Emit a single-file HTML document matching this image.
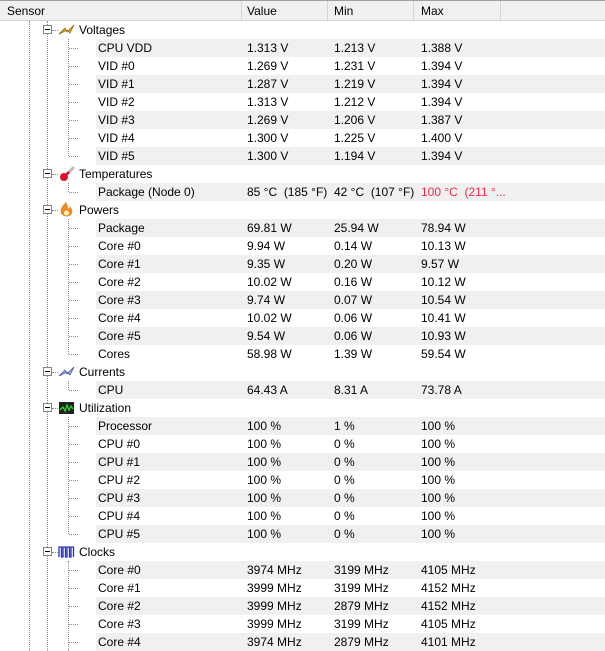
<!DOCTYPE html><html><head><meta charset="utf-8"><style>
body{margin:0;width:605px;height:651px;overflow:hidden;background:#fff;font:12px "Liberation Sans",sans-serif;color:#000;position:relative}
.h{position:absolute;left:0;top:0;width:605px;height:19px;background:#f0f0f0;border-top:1px solid #a0a0a0;border-bottom:1px solid #d5d5d5}
.h span{position:absolute;top:3px}
.h i{position:absolute;top:0;width:1px;height:19px;background:#d5d5d5}
.r{position:absolute;left:0;width:605px;height:18px;line-height:18px}
.s:before{content:"";position:absolute;left:96px;right:0;top:0;bottom:0;background:#f0f0f0}
.r span{position:absolute;top:0;white-space:nowrap}
.n{left:98px}.v{left:247px}.m{left:334px}.x{left:421px}.g{left:79px}
.vl{position:absolute;width:0;border-left:1px dotted #8a8a8a}
.hl{position:absolute;height:0;border-top:1px dotted #8a8a8a}
.b{position:absolute;left:43px;width:7px;height:7px;border:1px solid #848484;background:#fff}
.b:after{content:"";position:absolute;left:1px;top:3px;width:5px;height:1px;background:#000}
.ic{position:absolute;left:58px}
</style></head><body>
<div class="h"><span style="left:7px">Sensor</span><i style="left:241px"></i><span style="left:247px">Value</span><i style="left:327px"></i><span style="left:334px">Min</span><i style="left:413px"></i><span style="left:421px">Max</span><i style="left:500px"></i></div>
<div class="vl" style="left:29px;top:21px;height:630px"></div>
<div class="vl" style="left:47px;top:21px;height:630px"></div>
<!-- child verticals -->
<div class="vl" style="left:68px;top:39px;height:117px"></div>
<div class="vl" style="left:68px;top:183px;height:9px"></div>
<div class="vl" style="left:68px;top:219px;height:135px"></div>
<div class="vl" style="left:68px;top:381px;height:9px"></div>
<div class="vl" style="left:68px;top:417px;height:117px"></div>
<div class="vl" style="left:68px;top:561px;height:90px"></div>

<div class="r" style="top:21px"><div class="b" style="top:4px"></div><div class="hl" style="left:52px;top:9px;width:6px"></div><svg class="ic" width="18" height="18" style="top:0"><path d="M1 13 L7 7 L9 11 L16 4 L12 12 L9 9 Z" fill="#e8b020" stroke="#806000" stroke-width="0.7"/></svg><span class="g">Voltages</span></div>
<div class="r s" style="top:39px"><div class="hl" style="left:69px;top:9px;width:9px"></div><span class="n">CPU VDD</span><span class="v">1.313 V</span><span class="m">1.213 V</span><span class="x">1.388 V</span></div>
<div class="r" style="top:57px"><div class="hl" style="left:69px;top:9px;width:9px"></div><span class="n">VID #0</span><span class="v">1.269 V</span><span class="m">1.231 V</span><span class="x">1.394 V</span></div>
<div class="r s" style="top:75px"><div class="hl" style="left:69px;top:9px;width:9px"></div><span class="n">VID #1</span><span class="v">1.287 V</span><span class="m">1.219 V</span><span class="x">1.394 V</span></div>
<div class="r" style="top:93px"><div class="hl" style="left:69px;top:9px;width:9px"></div><span class="n">VID #2</span><span class="v">1.313 V</span><span class="m">1.212 V</span><span class="x">1.394 V</span></div>
<div class="r s" style="top:111px"><div class="hl" style="left:69px;top:9px;width:9px"></div><span class="n">VID #3</span><span class="v">1.269 V</span><span class="m">1.206 V</span><span class="x">1.387 V</span></div>
<div class="r" style="top:129px"><div class="hl" style="left:69px;top:9px;width:9px"></div><span class="n">VID #4</span><span class="v">1.300 V</span><span class="m">1.225 V</span><span class="x">1.400 V</span></div>
<div class="r s" style="top:147px"><div class="hl" style="left:69px;top:9px;width:9px"></div><span class="n">VID #5</span><span class="v">1.300 V</span><span class="m">1.194 V</span><span class="x">1.394 V</span></div>

<div class="r" style="top:165px"><div class="b" style="top:4px"></div><div class="hl" style="left:52px;top:9px;width:6px"></div><svg class="ic" width="18" height="18"><line x1="4" y1="14" x2="15" y2="3" stroke="#bbb" stroke-width="3" stroke-linecap="round"/><circle cx="6" cy="12" r="4" fill="#e0102a"/><line x1="6" y1="12" x2="11" y2="7" stroke="#e0102a" stroke-width="2.5"/></svg><span class="g">Temperatures</span></div>
<div class="r s" style="top:183px"><div class="hl" style="left:69px;top:9px;width:9px"></div><span class="n">Package (Node 0)</span><span class="v">85 °C&nbsp; (185 °F)</span><span class="m">42 °C&nbsp; (107 °F)</span><span class="x" style="color:#f0284a">100 °C&nbsp; (211 °...</span></div>

<div class="r" style="top:201px"><div class="b" style="top:4px"></div><div class="hl" style="left:52px;top:9px;width:6px"></div><svg class="ic" width="18" height="18"><path d="M8 1 C3 6 2 9 3 12 C4 16 13 17 14 12 C15 9 13 7 12 5 C11 8 10 8 10 7 C10 5 9 3 8 1Z" fill="#f08a20"/><circle cx="8.5" cy="12" r="2.5" fill="#fff3c0"/></svg><span class="g">Powers</span></div>
<div class="r s" style="top:219px"><div class="hl" style="left:69px;top:9px;width:9px"></div><span class="n">Package</span><span class="v">69.81 W</span><span class="m">25.94 W</span><span class="x">78.94 W</span></div>
<div class="r" style="top:237px"><div class="hl" style="left:69px;top:9px;width:9px"></div><span class="n">Core #0</span><span class="v">9.94 W</span><span class="m">0.14 W</span><span class="x">10.13 W</span></div>
<div class="r s" style="top:255px"><div class="hl" style="left:69px;top:9px;width:9px"></div><span class="n">Core #1</span><span class="v">9.35 W</span><span class="m">0.20 W</span><span class="x">9.57 W</span></div>
<div class="r" style="top:273px"><div class="hl" style="left:69px;top:9px;width:9px"></div><span class="n">Core #2</span><span class="v">10.02 W</span><span class="m">0.16 W</span><span class="x">10.12 W</span></div>
<div class="r s" style="top:291px"><div class="hl" style="left:69px;top:9px;width:9px"></div><span class="n">Core #3</span><span class="v">9.74 W</span><span class="m">0.07 W</span><span class="x">10.54 W</span></div>
<div class="r" style="top:309px"><div class="hl" style="left:69px;top:9px;width:9px"></div><span class="n">Core #4</span><span class="v">10.02 W</span><span class="m">0.06 W</span><span class="x">10.41 W</span></div>
<div class="r s" style="top:327px"><div class="hl" style="left:69px;top:9px;width:9px"></div><span class="n">Core #5</span><span class="v">9.54 W</span><span class="m">0.06 W</span><span class="x">10.93 W</span></div>
<div class="r" style="top:345px"><div class="hl" style="left:69px;top:9px;width:9px"></div><span class="n">Cores</span><span class="v">58.98 W</span><span class="m">1.39 W</span><span class="x">59.54 W</span></div>

<div class="r" style="top:363px"><div class="b" style="top:4px"></div><div class="hl" style="left:52px;top:9px;width:6px"></div><svg class="ic" width="18" height="18"><path d="M1 13 L7 7 L9 11 L16 4 L12 12 L9 9 Z" fill="#a8b8e8" stroke="#4050a0" stroke-width="0.8"/></svg><span class="g">Currents</span></div>
<div class="r s" style="top:381px"><div class="hl" style="left:69px;top:9px;width:9px"></div><span class="n">CPU</span><span class="v">64.43 A</span><span class="m">8.31 A</span><span class="x">73.78 A</span></div>

<div class="r" style="top:399px"><div class="b" style="top:4px"></div><div class="hl" style="left:52px;top:9px;width:6px"></div><svg class="ic" width="18" height="18"><rect x="1" y="3" width="15" height="12" fill="#202020"/><path d="M2 11 L5 8 L7 12 L9 6 L11 11 L13 7 L15 10" stroke="#30d030" stroke-width="1.3" fill="none"/></svg><span class="g">Utilization</span></div>
<div class="r s" style="top:417px"><div class="hl" style="left:69px;top:9px;width:9px"></div><span class="n">Processor</span><span class="v">100 %</span><span class="m">1 %</span><span class="x">100 %</span></div>
<div class="r" style="top:435px"><div class="hl" style="left:69px;top:9px;width:9px"></div><span class="n">CPU #0</span><span class="v">100 %</span><span class="m">0 %</span><span class="x">100 %</span></div>
<div class="r s" style="top:453px"><div class="hl" style="left:69px;top:9px;width:9px"></div><span class="n">CPU #1</span><span class="v">100 %</span><span class="m">0 %</span><span class="x">100 %</span></div>
<div class="r" style="top:471px"><div class="hl" style="left:69px;top:9px;width:9px"></div><span class="n">CPU #2</span><span class="v">100 %</span><span class="m">0 %</span><span class="x">100 %</span></div>
<div class="r s" style="top:489px"><div class="hl" style="left:69px;top:9px;width:9px"></div><span class="n">CPU #3</span><span class="v">100 %</span><span class="m">0 %</span><span class="x">100 %</span></div>
<div class="r" style="top:507px"><div class="hl" style="left:69px;top:9px;width:9px"></div><span class="n">CPU #4</span><span class="v">100 %</span><span class="m">0 %</span><span class="x">100 %</span></div>
<div class="r s" style="top:525px"><div class="hl" style="left:69px;top:9px;width:9px"></div><span class="n">CPU #5</span><span class="v">100 %</span><span class="m">0 %</span><span class="x">100 %</span></div>

<div class="r" style="top:543px"><div class="b" style="top:4px"></div><div class="hl" style="left:52px;top:9px;width:6px"></div><svg class="ic" width="18" height="18"><path d="M1 14 V4 H3.5 V14 H5 V4 H7.5 V14 H9 V4 H11.5 V14 H13 V4 H15.5 V14" stroke="#2030c0" stroke-width="1.3" fill="none"/></svg><span class="g">Clocks</span></div>
<div class="r s" style="top:561px"><div class="hl" style="left:69px;top:9px;width:9px"></div><span class="n">Core #0</span><span class="v">3974 MHz</span><span class="m">3199 MHz</span><span class="x">4105 MHz</span></div>
<div class="r" style="top:579px"><div class="hl" style="left:69px;top:9px;width:9px"></div><span class="n">Core #1</span><span class="v">3999 MHz</span><span class="m">3199 MHz</span><span class="x">4152 MHz</span></div>
<div class="r s" style="top:597px"><div class="hl" style="left:69px;top:9px;width:9px"></div><span class="n">Core #2</span><span class="v">3999 MHz</span><span class="m">2879 MHz</span><span class="x">4152 MHz</span></div>
<div class="r" style="top:615px"><div class="hl" style="left:69px;top:9px;width:9px"></div><span class="n">Core #3</span><span class="v">3999 MHz</span><span class="m">3199 MHz</span><span class="x">4105 MHz</span></div>
<div class="r s" style="top:633px"><div class="hl" style="left:69px;top:9px;width:9px"></div><span class="n">Core #4</span><span class="v">3974 MHz</span><span class="m">2879 MHz</span><span class="x">4101 MHz</span></div>
</body></html>
